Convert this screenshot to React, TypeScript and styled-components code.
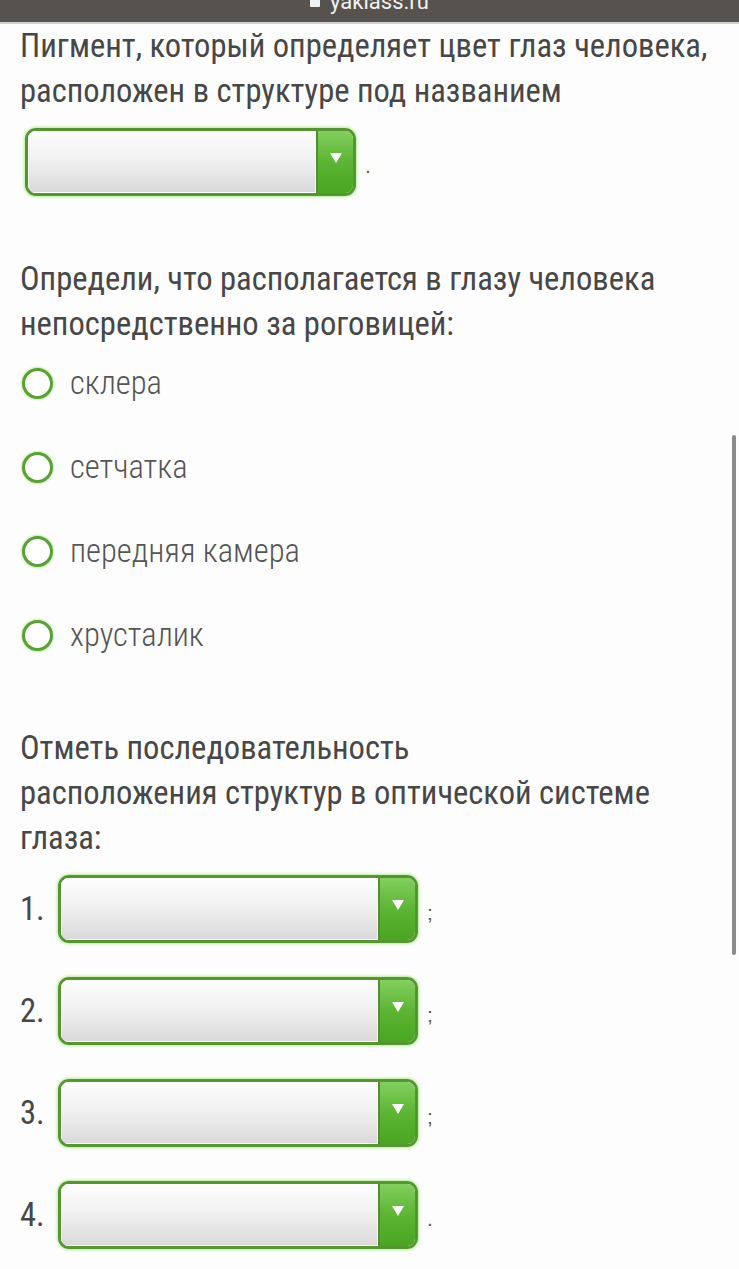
import React from 'react';
import styled, { createGlobalStyle } from 'styled-components';

const GlobalStyle = createGlobalStyle`
  html, body {
    margin: 0;
    padding: 0;
    background: #fdfdfd;
  }
  body {
    font-family: 'Roboto Condensed', Roboto, 'Liberation Sans', sans-serif;
    color: #474747;
    overflow: hidden;
  }
`;

const Page = styled.div`
  position: relative;
  width: 739px;
  height: 1269px;
  overflow: hidden;
`;

const UrlBar = styled.div`
  height: 22px;
  background: #58524f;
  border-bottom: 2px solid #cfcfcf;
  display: flex;
  justify-content: center;
  align-items: flex-end;
  overflow: hidden;
  color: #f2f2f2;
  font-family: Roboto, 'Liberation Sans', sans-serif;
  font-size: 22px;
  line-height: 22px;
`;

const UrlText = styled.span`
  transform: translateY(-9px);
  display: flex;
  align-items: center;
  gap: 10px;
`;

const Lock = styled.span`
  width: 10px;
  height: 9px;
  background: #f2f2f2;
  border-radius: 1px;
`;

const Content = styled.main`
  padding: 0 0 0 20px;
  display: flex;
  flex-direction: column;
`;

const Question = styled.p<{ $top: number }>`
  margin: ${(p) => p.$top}px 0 0;
  font-size: 32.6px;
  line-height: 45px;
  color: #474747;
  white-space: nowrap;
`;

const SelectRow = styled.div<{ $top: number; $indent?: number }>`
  margin-top: ${(p) => p.$top}px;
  padding-left: ${(p) => p.$indent ?? 0}px;
  display: flex;
  align-items: center;
  height: 68px;
`;

const Num = styled.span`
  width: 38px;
  font-size: 32.6px;
  color: #474747;
`;

const Select = styled.div<{ $w: number }>`
  width: ${(p) => p.$w}px;
  height: 68px;
  box-sizing: border-box;
  border: 3px solid #54962f;
  border-radius: 11px;
  box-shadow: 0 0 3px 1px #b6ec98;
  display: flex;
  overflow: hidden;
`;

const Field = styled.div`
  flex: 1;
  background: linear-gradient(#fdfdfd, #f1f1f1 45%, #d9d9d9);
  box-shadow: inset 0 0 0 1px #ffffff;
`;

const Arrow = styled.div`
  width: 37px;
  border-left: 2px solid #4f8f2c;
  background: linear-gradient(#82cf5e, #5cb534 50%, #49a522);
  display: flex;
  align-items: center;
  justify-content: center;
  padding-bottom: 8px;
  box-sizing: border-box;
  &::after {
    content: '';
    border-left: 6px solid transparent;
    border-right: 6px solid transparent;
    border-top: 10px solid #ffffff;
  }
`;

const Punct = styled.span`
  margin-left: 9px;
  font-family: 'Liberation Sans', sans-serif;
  font-size: 21px;
  color: #5a5a5a;
  transform: translateY(4px);
`;

const Options = styled.ul`
  list-style: none;
  margin: 14px 0 0;
  padding: 0 0 0 2px;
  display: flex;
  flex-direction: column;
  gap: 40px;
`;

const Option = styled.li`
  display: flex;
  align-items: center;
  height: 44px;
  gap: 17px;
  font-size: 32.6px;
  font-weight: 300;
  color: #555;
`;

const Radio = styled.span`
  width: 31px;
  height: 31px;
  box-sizing: border-box;
  border-radius: 50%;
  border: 3px solid #5aa135;
  box-shadow: 0 0 2px 1px #c5efad;
  background: #fff;
`;

const Scrollbar = styled.div`
  position: absolute;
  left: 732px;
  top: 435px;
  width: 4px;
  height: 520px;
  border-radius: 2px;
  background: #8a8a8a;
`;

const options = ['склера', 'сетчатка', 'передняя камера', 'хрусталик'];
const order = [';', ';', ';', '.'];

export default function App() {
  return (
    <Page>
      <GlobalStyle />
      <UrlBar>
        <UrlText>
          <Lock />
          yaklass.ru
        </UrlText>
      </UrlBar>
      <Content>
        <Question $top={0}>
          Пигмент, который определяет цвет глаз человека,
          <br />
          расположен в структуре под названием
        </Question>
        <SelectRow $top={14} $indent={5}>
          <Select $w={331}>
            <Field />
            <Arrow />
          </Select>
          <Punct>.</Punct>
        </SelectRow>
        <Question $top={61}>
          Определи, что располагается в глазу человека
          <br />
          непосредственно за роговицей:
        </Question>
        <Options>
          {options.map((o) => (
            <Option key={o}>
              <Radio />
              {o}
            </Option>
          ))}
        </Options>
        <Question $top={69}>
          Отметь последовательность
          <br />
          расположения структур в оптической системе
          <br />
          глаза:
        </Question>
        {order.map((p, i) => (
          <SelectRow key={i} $top={i === 0 ? 14 : 34}>
            <Num>{i + 1}.</Num>
            <Select $w={360}>
              <Field />
              <Arrow />
            </Select>
            <Punct>{p}</Punct>
          </SelectRow>
        ))}
      </Content>
      <Scrollbar />
    </Page>
  );
}
